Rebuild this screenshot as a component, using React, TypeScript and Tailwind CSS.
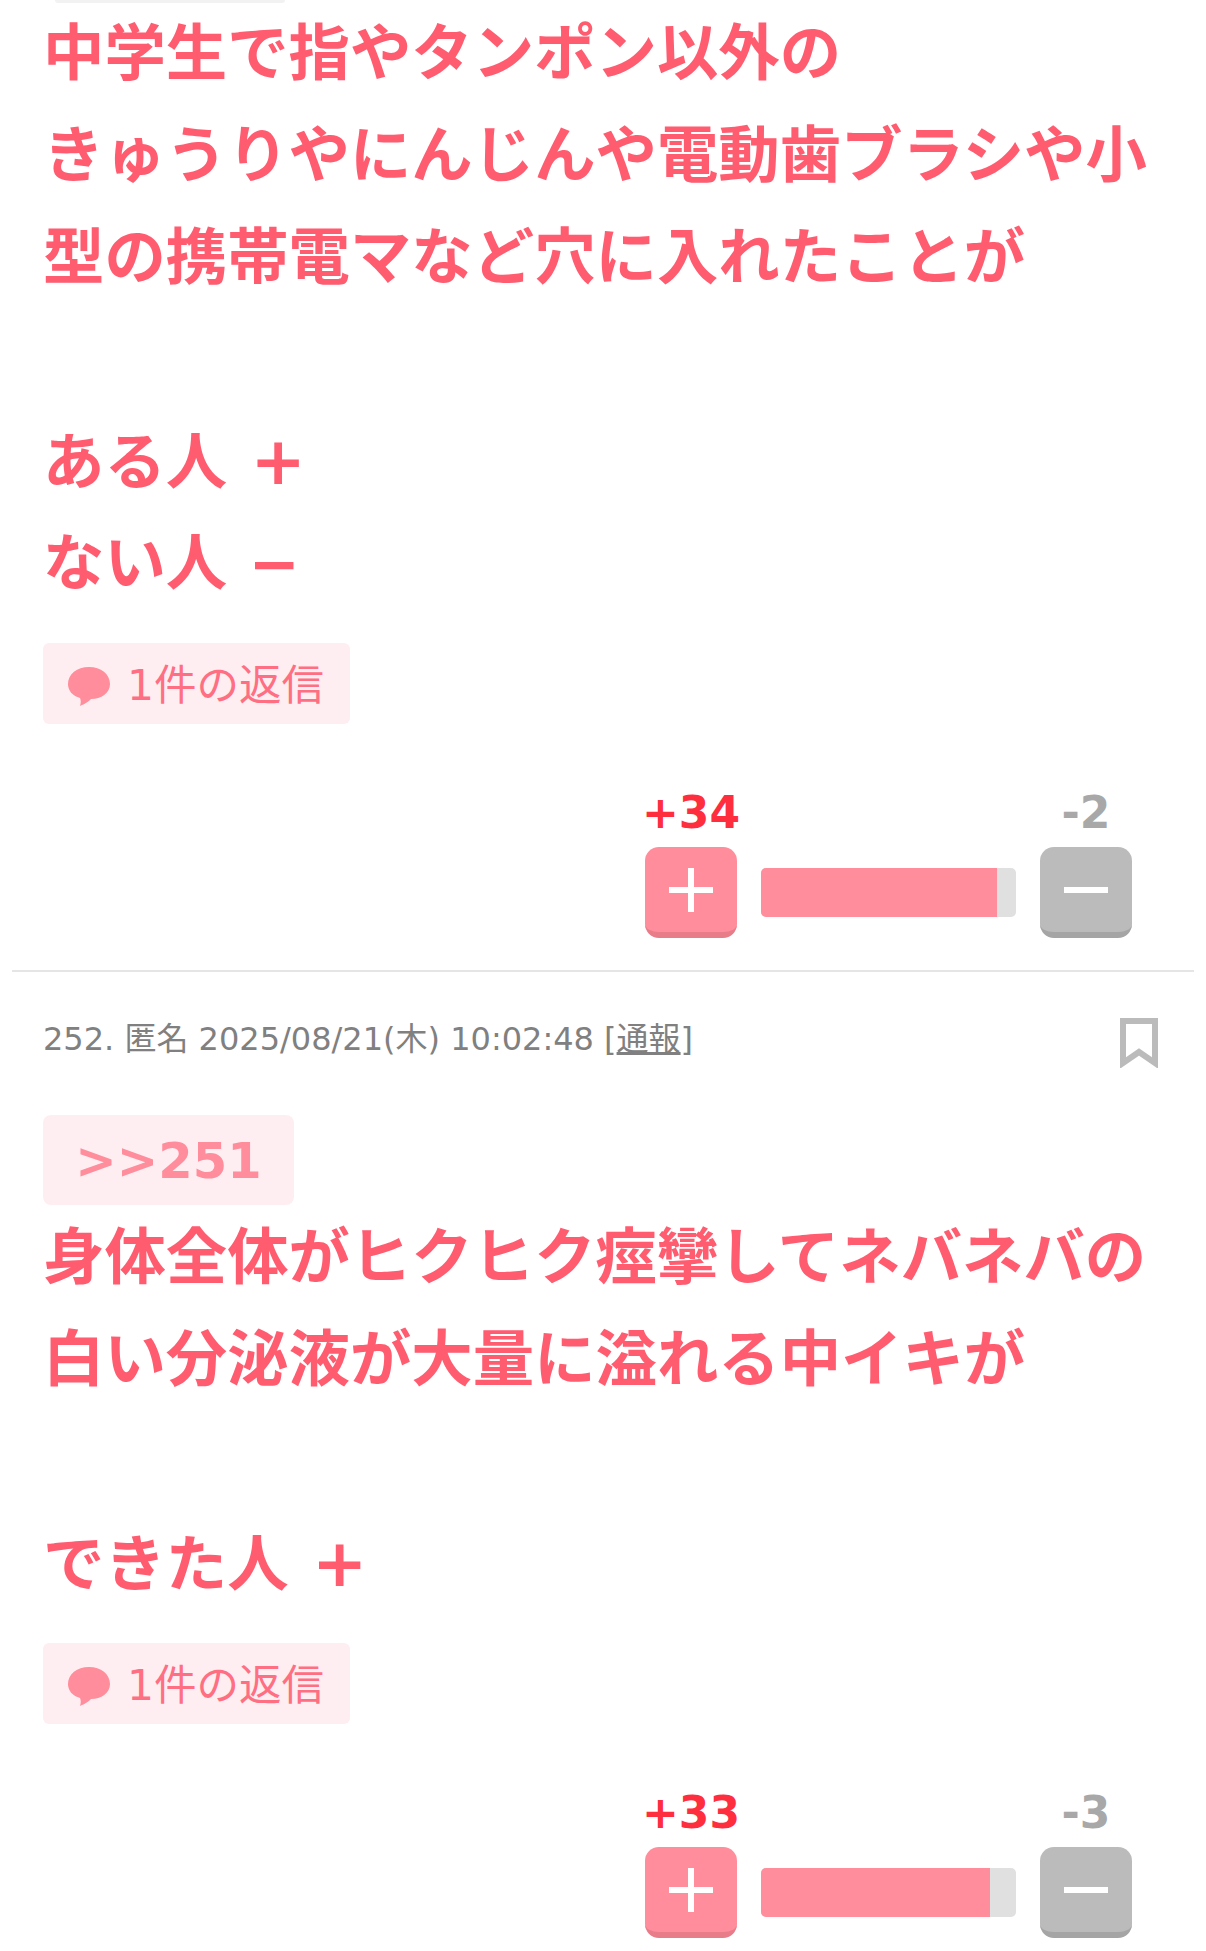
const font = { fontFamily: '"DejaVu Sans", "Noto Sans CJK JP", sans-serif' };

function ReplyChip() {
  return (
    <div className="ml-[43px] flex h-[81px] w-[307px] items-center rounded-[6px] bg-[#ffeef1] pl-[24px] text-[42.5px] text-[#ff6f84]">
      <svg viewBox="0 0 44 44" className="mt-[2px] mr-[16px] h-[44px] w-[44px]">
        <path d="M22 4C34 4 43 11 43 21C43 30 34 36 24 36C20 40 15 42 13 43C14 40 14 37 13 35C6 33 1 28 1 21C1 11 10 4 22 4Z" fill="#ff8d9b" />
      </svg>
      <span className="mt-[4px]">1件の返信</span>
    </div>
  );
}

function Votes({ plus, minus, percent }: { plus: string; minus: string; percent: number }) {
  return (
    <div className="flex justify-end pr-[73px]">
      <div className="flex w-[488px] items-end">
        <div className="flex w-[92px] flex-col items-center">
          <span className="text-[44px] leading-[62px] font-bold whitespace-nowrap text-[#ff2e3e]">{plus}</span>
          <button className="mt-[3px] flex h-[91px] w-[92px] items-start justify-center rounded-[14px] border-b-[6px] border-[#e87c89] bg-[#ff8d9b] pt-[21px]">
            <svg viewBox="0 0 44 44" className="h-[44px] w-[44px]">
              <path d="M22 0V44M0 22H44" stroke="#fff" strokeWidth="6" fill="none" />
            </svg>
          </button>
        </div>
        <div className="mx-[24px] mb-[21px] h-[49px] w-[255px] overflow-hidden rounded-[5px] bg-[#e0e0e0]">
          <div className="h-full bg-[#ff8d9b]" style={{ width: `${percent}%` }} />
        </div>
        <div className="flex w-[92px] flex-col items-center">
          <span className="text-[44px] leading-[62px] font-bold whitespace-nowrap text-[#a8a8a8]">{minus}</span>
          <button className="mt-[3px] flex h-[91px] w-[92px] items-start justify-center rounded-[14px] border-b-[6px] border-[#a5a5a5] bg-[#bbbbbb] pt-[21px]">
            <svg viewBox="0 0 44 44" className="h-[44px] w-[44px]">
              <path d="M0 22H44" stroke="#fff" strokeWidth="6" fill="none" />
            </svg>
          </button>
        </div>
      </div>
    </div>
  );
}

function Body({ lines }: { lines: React.ReactNode[] }) {
  return (
    <div className="pl-[43px] text-[61.4px] leading-[102px] font-bold whitespace-nowrap text-[#ff5c70]">
      {lines.map((line, i) => (
        <div key={i} className="h-[102px]">
          {line}
        </div>
      ))}
    </div>
  );
}

function BigPlus() {
  return <span className="ml-[2px] text-[66px]">+</span>;
}

export default function App() {
  return (
    <div className="h-[1951px] w-[1206px] overflow-hidden bg-white" style={font}>
      <div className="ml-[55px] h-[3px] w-[230px] rounded-b bg-[#f2f2f2]" />
      <Body
        lines={[
          "中学生で指やタンポン以外の",
          "きゅうりやにんじんや電動歯ブラシや小",
          "型の携帯電マなど穴に入れたことが",
          "",
          <>ある人 <BigPlus /></>,
          "ない人 −",
        ]}
      />
      <div className="mt-[28px]">
        <ReplyChip />
      </div>
      <div className="mt-[58px]">
        <Votes plus="+34" minus="-2" percent={92.7} />
      </div>
      <div className="mx-[12px] mt-[32px] border-t-[2px] border-[#e5e5e5]" />
      <div className="mt-[42px] flex h-[50px] items-center justify-between pr-[48px] pl-[43px] text-[32px] text-[#808080]">
        <span>
          252. 匿名 2025/08/21(木) 10:02:48 [<span className="underline">通報</span>]
        </span>
        <svg viewBox="0 0 38 50" className="mt-[8px] h-[50px] w-[38px]">
          <path d="M3 3H35V45L19 34L3 45Z" fill="none" stroke="#bbbbbb" strokeWidth="6" />
        </svg>
      </div>
      <div className="mt-[51px] ml-[43px] flex h-[90px] w-[251px] items-center justify-center rounded-[8px] bg-[#ffeef1] pt-[2px] text-[49.5px] font-bold text-[#ff8d9b]">
        &gt;&gt;251
      </div>
      <div className="mt-[2px]">
        <Body lines={["身体全体がヒクヒク痙攣してネバネバの", "白い分泌液が大量に溢れる中イキが", "", <>できた人 <BigPlus /></>]} />
      </div>
      <div className="mt-[28px]">
        <ReplyChip />
      </div>
      <div className="mt-[58px]">
        <Votes plus="+33" minus="-3" percent={89.8} />
      </div>
    </div>
  );
}
